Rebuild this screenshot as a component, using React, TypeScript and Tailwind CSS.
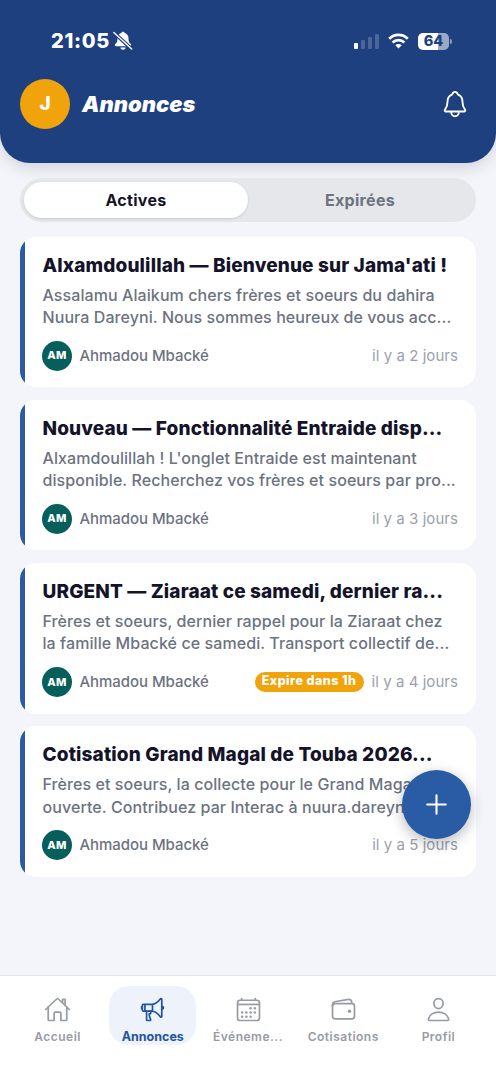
import React, { useState } from 'react';
import {
  IoHomeOutline,
  IoMegaphoneOutline,
  IoCalendarOutline,
  IoWalletOutline,
  IoPersonOutline,
  IoNotificationsOutline,
  IoAdd,
} from 'react-icons/io5';
import type { IconType } from 'react-icons';

interface Annonce {
  title: string;
  lines: [string, string];
  age: string;
  badge?: string;
}

const annonces: Annonce[] = [
  {
    title: "Alxamdoulillah — Bienvenue sur Jama'ati !",
    lines: ['Assalamu Alaikum chers frères et soeurs du dahira', 'Nuura Dareyni. Nous sommes heureux de vous acc...'],
    age: 'il y a 2 jours',
  },
  {
    title: 'Nouveau — Fonctionnalité Entraide disp...',
    lines: ["Alxamdoulillah ! L'onglet Entraide est maintenant", 'disponible. Recherchez vos frères et soeurs par pro...'],
    age: 'il y a 3 jours',
  },
  {
    title: 'URGENT — Ziaraat ce samedi, dernier ra...',
    lines: ['Frères et soeurs, dernier rappel pour la Ziaraat chez', 'la famille Mbacké ce samedi. Transport collectif de...'],
    age: 'il y a 4 jours',
    badge: 'Expire dans 1h',
  },
  {
    title: 'Cotisation Grand Magal de Touba 2026...',
    lines: ['Frères et soeurs, la collecte pour le Grand Maga', 'ouverte. Contribuez par Interac à nuura.dareyn'],
    age: 'il y a 5 jours',
  },
];

const tabs: { label: string; icon: IconType }[] = [
  { label: 'Accueil', icon: IoHomeOutline },
  { label: 'Annonces', icon: IoMegaphoneOutline },
  { label: 'Événeme...', icon: IoCalendarOutline },
  { label: 'Cotisations', icon: IoWalletOutline },
  { label: 'Profil', icon: IoPersonOutline },
];

const StatusBar: React.FC = () => (
  <div className="flex items-center justify-between h-[30px] pl-[51px] pr-[44px]">
    <div className="flex items-center gap-[3px]">
      <span className="text-[20px] font-extrabold leading-none tracking-[0.7px]">21:05</span>
      {/* Silent mode */}
      <svg width="20" height="20" viewBox="0 0 19 19" fill="none">
        <path d="M9.5.6c-.9 0-1.5.6-1.6 1.3C5.6 2.6 4.3 4.4 4.3 6.7c0 3.300-.6 4.300-2.100 5.700-.8.7-.4 2 .7 2h13.200c1.100 0 1.500-1.300.7-2-1.500-1.400-2.100-2.400-2.100-5.700 0-2.300-1.300-4.100-3.600-4.800C11 1.2 10.4.6 9.5.6z" fill="white" />
        <path d="M7 15.700h5c-.2 1.400-1.200 2.100-2.500 2.100S7.200 17.100 7 15.700z" fill="white" />
        <path d="M.8 1.400l17 15.800" stroke="#1e407f" strokeWidth="3.4" />
        <path d="M.8 1.400l17 15.800" stroke="white" strokeWidth="1.3" strokeLinecap="round" />
      </svg>
    </div>
    <div className="flex items-center gap-[9px]">
      <div className="flex items-end gap-[3px] h-4">
        <span className="w-1 h-[6px] rounded-[1px] bg-white" />
        <span className="w-1 h-[9px] rounded-[1px] bg-white/20" />
        <span className="w-1 h-[12px] rounded-[1px] bg-white/20" />
        <span className="w-1 h-[15px] rounded-[1px] bg-white/20" />
      </div>
      <svg width="21" height="16" viewBox="0 0 21 16" fill="none" stroke="white" strokeWidth="2.7">
        <path d="M1.2 5.7a13.2 13.2 0 0 1 18.6 0" />
        <path d="M4.6 9.5a8.4 8.4 0 0 1 11.8 0" />
        <path d="M7.3 12.2a4.6 4.6 0 0 1 6.4 0L10.5 15.6z" fill="white" stroke="none" />
      </svg>
      <div className="flex items-center gap-px">
        <div className="flex items-center justify-center w-[31px] h-[17px] rounded-[5px] bg-linear-to-r from-white from-66% to-[#9aa9c6] to-66%">
          <span className="text-[14.5px] font-extrabold leading-none text-[#1e407f]">64</span>
        </div>
        <span className="w-[2px] h-[5px] rounded-r-full bg-[#8e9fbf]" />
      </div>
    </div>
  </div>
);

const AnnonceCard: React.FC<{ annonce: Annonce }> = ({ annonce }) => (
  <article className="flex h-[150.4px] rounded-2xl bg-white overflow-hidden whitespace-nowrap">
    <div className="w-[5px] shrink-0 bg-[#2a5ca6]" />
    <div className="flex-1 min-w-0 pl-[17.5px] pr-[18px] pt-[16px]">
      <h2 className="text-[19px] leading-[25px] font-extrabold tracking-[0.14px] text-[#14132a]">{annonce.title}</h2>
      <div className="mt-[6px] text-[16px] leading-[22.3px] tracking-[0.08px] font-medium text-[#6c737f]">
        <p>{annonce.lines[0]}</p>
        <p>{annonce.lines[1]}</p>
      </div>
      <div className="mt-[12px] flex items-center h-[30px]">
        <span className="flex items-center justify-center w-[30px] h-[30px] -ml-[0.5px] rounded-full bg-[#065f5b] text-white text-[11px] font-extrabold tracking-[0.3px]">
          AM
        </span>
        <span className="ml-[7.5px] pt-px text-[15px] tracking-[-0.05px] font-medium text-[#6c737f]">Ahmadou Mbacké</span>
        <div className="ml-auto flex items-center gap-2">
          {annonce.badge && (
            <span className="flex items-center justify-center w-[109px] h-5 rounded-full bg-[#f0a30a] text-white text-[12.5px] font-extrabold tracking-[0.45px]">
              {annonce.badge}
            </span>
          )}
          <span className="pt-px text-[15px] tracking-[0.05px] text-[#9ba1ac]">{annonce.age}</span>
        </div>
      </div>
    </div>
  </article>
);

const App: React.FC = () => {
  const [filter, setFilter] = useState('Actives');

  return (
    <div className="relative flex flex-col w-[496px] h-[1080px] overflow-hidden bg-[#f3f5fa] font-['Inter',sans-serif]">
      <header className="h-[163px] shrink-0 pt-[26px] rounded-b-[30px] bg-[#1e407f] text-white shadow-[0_5px_16px_rgba(0,0,0,0.13)]">
        <StatusBar />
        <div className="mt-[23px] flex items-center pl-5 pr-[26px]">
          <span className="flex items-center justify-center w-[50px] h-[50px] rounded-full bg-[#f0a30a] text-[19px] font-extrabold">J</span>
          <h1 className="ml-3 text-[22px] font-black italic leading-none">Annonces</h1>
          <IoNotificationsOutline size={30} className="ml-auto" />
        </div>
      </header>

      <main className="flex-1 px-5 pt-[15px]">
        <div className="flex h-[44px] p-1 rounded-full bg-[#e5e7eb]">
          {['Actives', 'Expirées'].map((name) => (
            <button
              key={name}
              onClick={() => setFilter(name)}
              className={
                filter === name
                  ? 'flex-1 rounded-full bg-white text-[16px] font-bold tracking-[0.3px] text-[#14132a] shadow-[0_1px_3px_rgba(0,0,0,0.12)]'
                  : 'flex-1 rounded-full text-[16px] font-bold tracking-[0.3px] text-[#6c737f]'
              }
            >
              {name}
            </button>
          ))}
        </div>
        <div className="mt-[15px] flex flex-col gap-[12.7px]">
          {annonces.map((annonce) => (
            <AnnonceCard key={annonce.title} annonce={annonce} />
          ))}
        </div>
      </main>

      <nav className="flex h-[105px] shrink-0 px-[10px] pt-[10px] border-t border-[#e2e5ea] bg-white">
        {tabs.map(({ label, icon: Icon }) => (
          <div key={label} className="flex-1 flex justify-center">
            <button
              className={
                label === 'Annonces'
                  ? 'flex flex-col items-center w-[87px] h-[59px] pt-[10px] rounded-[20px] bg-[#edf2fb] text-[#2454a0]'
                  : 'flex flex-col items-center w-[87px] h-[59px] pt-[10px] text-[#969ba4]'
              }
            >
              <Icon size={27} />
              <span
                className={
                  label === 'Annonces'
                    ? 'mt-[6px] text-[12.5px] leading-[16px] font-bold'
                    : 'mt-[6px] text-[12px] leading-[16px] font-semibold tracking-[0.5px]'
                }
              >
                {label}
              </span>
            </button>
          </div>
        ))}
      </nav>

      {/* Floating add button */}
      <button className="absolute left-[402px] top-[770px] flex items-center justify-center w-[69px] h-[69px] rounded-full bg-[#2a5ca6] text-white shadow-[0_4px_14px_rgba(0,0,0,0.28)]">
        <IoAdd size={33} />
      </button>
    </div>
  );
};

export default App;
